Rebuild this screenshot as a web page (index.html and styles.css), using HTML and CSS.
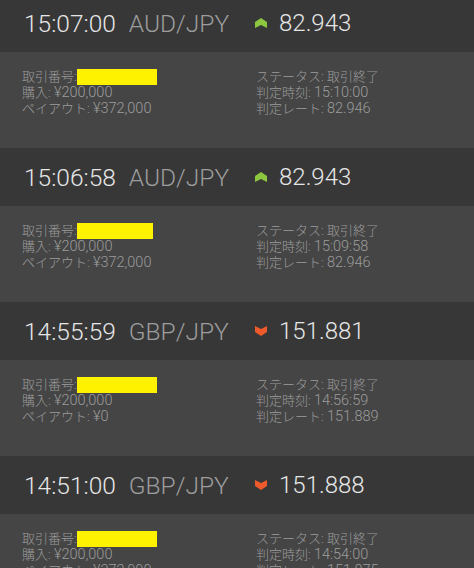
FILE: index.html
```html
<!DOCTYPE html>
<html lang="ja">
<head>
<meta charset="utf-8">
<link rel="stylesheet" href="styles.css">
</head>
<body>
<div class="list">
  <section class="trade">
    <div class="head">
      <div class="when"><span class="time">15:07:00</span><span class="pair">AUD/JPY</span></div>
      <svg class="arrow" viewBox="0 0 12 10"><polygon class="up" points="0,4 6,0 12,4 12,10 6,7 0,10"/></svg>
      <span class="price">82.943</span>
    </div>
    <div class="detail">
      <div class="col">
        <div><span class="k">取引番号:</span><span class="mask"></span></div>
        <div><span class="k">購入: </span>¥200,000</div>
        <div><span class="k">ペイアウト: </span>¥372,000</div>
      </div>
      <div class="col">
        <div><span class="k">ステータス: 取引終了</span></div>
        <div><span class="k">判定時刻: </span>15:10:00</div>
        <div><span class="k">判定レート: </span>82.946</div>
      </div>
    </div>
  </section>
  <section class="trade">
    <div class="head">
      <div class="when"><span class="time">15:06:58</span><span class="pair">AUD/JPY</span></div>
      <svg class="arrow" viewBox="0 0 12 10"><polygon class="up" points="0,4 6,0 12,4 12,10 6,7 0,10"/></svg>
      <span class="price">82.943</span>
    </div>
    <div class="detail">
      <div class="col">
        <div><span class="k">取引番号:</span><span class="mask short"></span></div>
        <div><span class="k">購入: </span>¥200,000</div>
        <div><span class="k">ペイアウト: </span>¥372,000</div>
      </div>
      <div class="col">
        <div><span class="k">ステータス: 取引終了</span></div>
        <div><span class="k">判定時刻: </span>15:09:58</div>
        <div><span class="k">判定レート: </span>82.946</div>
      </div>
    </div>
  </section>
  <section class="trade">
    <div class="head">
      <div class="when"><span class="time">14:55:59</span><span class="pair">GBP/JPY</span></div>
      <svg class="arrow" viewBox="0 0 12 10"><polygon class="down" points="0,0 6,3 12,0 12,6 6,10 0,6"/></svg>
      <span class="price">151.881</span>
    </div>
    <div class="detail">
      <div class="col">
        <div><span class="k">取引番号:</span><span class="mask"></span></div>
        <div><span class="k">購入: </span>¥200,000</div>
        <div><span class="k">ペイアウト: </span>¥0</div>
      </div>
      <div class="col">
        <div><span class="k">ステータス: 取引終了</span></div>
        <div><span class="k">判定時刻: </span>14:56:59</div>
        <div><span class="k">判定レート: </span>151.889</div>
      </div>
    </div>
  </section>
  <section class="trade">
    <div class="head">
      <div class="when"><span class="time">14:51:00</span><span class="pair">GBP/JPY</span></div>
      <svg class="arrow" viewBox="0 0 12 10"><polygon class="down" points="0,0 6,3 12,0 12,6 6,10 0,6"/></svg>
      <span class="price">151.888</span>
    </div>
    <div class="detail">
      <div class="col">
        <div><span class="k">取引番号:</span><span class="mask"></span></div>
        <div><span class="k">購入: </span>¥200,000</div>
        <div><span class="k">ペイアウト: </span>¥372,000</div>
      </div>
      <div class="col">
        <div><span class="k">ステータス: 取引終了</span></div>
        <div><span class="k">判定時刻: </span>14:54:00</div>
        <div><span class="k">判定レート: </span>151.875</div>
      </div>
    </div>
  </section>
</div>
</body>
</html>
```

FILE: styles.css
```css
html, body {
  margin: 0;
  padding: 0;
  background: #454545;
  overflow: hidden;
}
body {
  font-family: Roboto, "Noto Sans CJK JP", sans-serif;
}
.list {
  margin-top: -6px;
}
.head {
  height: 58px;
  background: #373737;
  display: flex;
  align-items: center;
  padding-left: 24px;
}
.when {
  width: 231px;
  display: flex;
  align-items: baseline;
  font-size: 24.5px;
  font-weight: 300;
}
.time {
  color: #e6e6e6;
}
.pair {
  color: #9d9d9d;
  margin-left: 13px;
}
.arrow {
  width: 12px;
  height: 10px;
  flex: none;
}
.up { fill: #8dc63f; }
.down { fill: #ee5a2c; }
.price {
  margin-left: 12px;
  font-size: 24px;
  font-weight: 300;
  color: #e6e6e6;
}
.detail {
  height: 96px;
  box-sizing: border-box;
  background: #454545;
  padding: 17px 0 0 22px;
  display: grid;
  grid-template-columns: 234px 1fr;
  align-content: start;
  font-size: 14.5px;
  line-height: 16px;
  color: #9c9c9c;
  font-weight: 300;
}
.col > div {
  height: 16px;
  white-space: nowrap;
}
.k {
  font-size: 13px;
}
.mask {
  display: inline-block;
  width: 80px;
  height: 16px;
  background: #fff200;
  vertical-align: top;
}
.mask.short {
  width: 76px;
}
```
